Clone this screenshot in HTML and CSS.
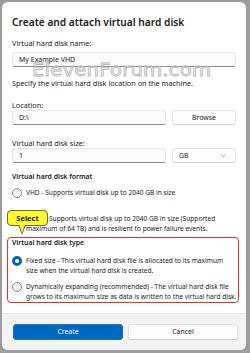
FILE: index.html
```html
<!DOCTYPE html>
<html>
<head>
<meta charset="utf-8">
<link rel="stylesheet" href="styles.css">
</head>
<body>
<div class="dialog">
  <div class="body">
    <h1 class="title">Create and attach virtual hard disk</h1>
    <div class="label l-name">Virtual hard disk name:</div>
    <div class="input i-name">My Example VHD</div>
    <div class="hint">Specify the virtual hard disk location on the machine.</div>
    <div class="label l-loc">Location:</div>
    <div class="row">
      <div class="input grow">D:\</div>
      <div class="btn">Browse</div>
    </div>
    <div class="label l-size">Virtual hard disk size:</div>
    <div class="row">
      <div class="input grow">1</div>
      <div class="select"><span>GB</span><svg width="5" height="3" viewBox="0 0 5 3"><path d="M0.5 0.5 L2.5 2.5 L4.5 0.5" fill="none" stroke="#777" stroke-width="0.7"/></svg></div>
    </div>
    <div class="heading h-format">Virtual hard disk format</div>
    <div class="radio r-vhd"><span class="dot"></span><span class="rtext">VHD - Supports virtual disk up to 2040 GB in size</span></div>
    <div class="radio r-vhdx"><span class="dot"></span><span class="rtext">VHDX - Supports virtual disk up to 2040 GB in size (Supported<br>maximum of 64 TB) and is resilient to power failure events.</span></div>
    <div class="group">
      <div class="heading h-type">Virtual hard disk type</div>
      <div class="radio r-fixed"><span class="dot on"></span><span class="rtext">Fixed size - This virtual hard disk file is allocated to its maximum<br>size when the virtual hard disk is created.</span></div>
      <div class="radio r-dyn"><span class="dot"></span><span class="rtext">Dynamically expanding (recommended) - The virtual hard disk file<br>grows to its maximum size as data is written to the virtual hard disk.</span></div>
    </div>
  </div>
  <div class="footer">
    <div class="fbtn primary">Create</div>
    <div class="fbtn">Cancel</div>
  </div>
  <div class="watermark">ElevenForum.com</div>
  <div class="callout">Select<span class="tail"></span><span class="tail-in"></span></div>
</div>
</body>
</html>
```

FILE: styles.css
```css
html, body {
  margin: 0;
  padding: 0;
}
body {
  background: #9c9c9c;
  width: 250px;
  height: 353px;
  overflow: hidden;
  font-family: "Noto Sans", "Open Sans", sans-serif;
  color: #1b1b1b;
}
.dialog {
  position: relative;
  margin: 2px 0 0 2px;
  width: 244px;
  height: 348px;
  background: #ffffff;
  border-radius: 6px;
  overflow: hidden;
  display: flex;
  flex-direction: column;
}
.body {
  flex: 1;
  padding: 14px 10px 0 10px;
}
.title {
  margin: 0;
  font-size: 10.2px;
  line-height: 13px;
  font-weight: 600;
  color: #1a1a1a;
}
.label, .hint {
  font-size: 7.3px;
  line-height: 10px;
}
.l-name { margin-top: 9px; }
.i-name { margin-top: 4px; height: 14px; }
.hint { margin-top: 11px; }
.l-loc { margin-top: 12px; }
.l-size { margin-top: 13px; }
.input {
  box-sizing: border-box;
  height: 15px;
  border: 1px solid #e6e6e6;
  border-bottom-color: #8d8d8d;
  border-radius: 3px;
  background: #fbfbfb;
  padding-left: 6px;
  font-size: 7px;
  line-height: 13px;
}
.row {
  display: flex;
  gap: 6px;
}
.grow { flex: 1; }
.btn, .select {
  box-sizing: border-box;
  width: 64px;
  height: 15px;
  border: 1px solid #e3e3e3;
  border-bottom-color: #d0d0d0;
  border-radius: 3px;
  background: #fdfdfd;
  font-size: 6.9px;
  line-height: 13px;
}
.btn { text-align: center; }
.select {
  display: flex;
  align-items: center;
  justify-content: space-between;
  padding: 0 9px 0 6px;
}
.heading {
  font-size: 6.9px;
  line-height: 10px;
  font-weight: 600;
}
.h-format { margin-top: 9px; }
.radio {
  display: flex;
  gap: 4px;
  font-size: 6.6px;
  line-height: 9.5px;
  white-space: nowrap;
}
.dot {
  flex: none;
  box-sizing: border-box;
  width: 10px;
  height: 10px;
  border-radius: 50%;
  border: 1px solid #8a8a8a;
  background: #f6f6f6;
}
.dot.on {
  border: 3px solid #0067c0;
  background: #ffffff;
}
.rtext { display: block; }
.r-vhd { margin-top: 6px; }
.r-vhdx { margin-top: 16px; }
.group {
  margin: 4px -3px 0 -5px;
  padding: 0 2px 1px 4px;
  border: 1px solid #e53030;
  border-radius: 4px;
}
.h-type { margin-top: 0; }
.r-fixed { margin-top: 8px; }
.r-dyn { margin-top: 7px; }
.footer {
  flex: none;
  height: 37px;
  box-sizing: border-box;
  background: #f3f3f3;
  border-top: 1px solid #e8e8e8;
  padding: 10px 8px 0 11px;
  display: flex;
  gap: 5px;
}
.fbtn {
  flex: 1;
  box-sizing: border-box;
  height: 16px;
  border: 1px solid #e0e0e0;
  border-bottom-color: #cfcfcf;
  border-radius: 3px;
  background: #fdfdfd;
  font-size: 6.9px;
  line-height: 14px;
  text-align: center;
}
.fbtn.primary {
  background: #0067c0;
  border-color: #1a73c4;
  color: #ffffff;
}
.watermark {
  position: absolute;
  left: 30px;
  top: 58px;
  font-family: "DejaVu Sans", sans-serif;
  font-size: 17px;
  line-height: 20px;
  letter-spacing: 0.2px;
  transform: scaleX(1.15);
  transform-origin: left top;
  color: transparent;
  -webkit-text-stroke: 0.8px #b8b8b8;
}
.callout {
  position: absolute;
  left: 5px;
  top: 208px;
  width: 41px;
  height: 16px;
  box-sizing: border-box;
  background: #fbfb2a;
  border: 1px solid #6c6c3a;
  border-radius: 4px;
  font-size: 7.5px;
  font-weight: 700;
  line-height: 14px;
  text-align: center;
  color: #222;
}
.tail {
  position: absolute;
  left: 10px;
  top: 14px;
  width: 0;
  height: 0;
  border-left: 4px solid transparent;
  border-right: 4px solid transparent;
  border-top: 10px solid #6c6c3a;
}
.tail-in {
  position: absolute;
  left: 11px;
  top: 13px;
  width: 0;
  height: 0;
  border-left: 3px solid transparent;
  border-right: 3px solid transparent;
  border-top: 9px solid #fbfb2a;
}
```
